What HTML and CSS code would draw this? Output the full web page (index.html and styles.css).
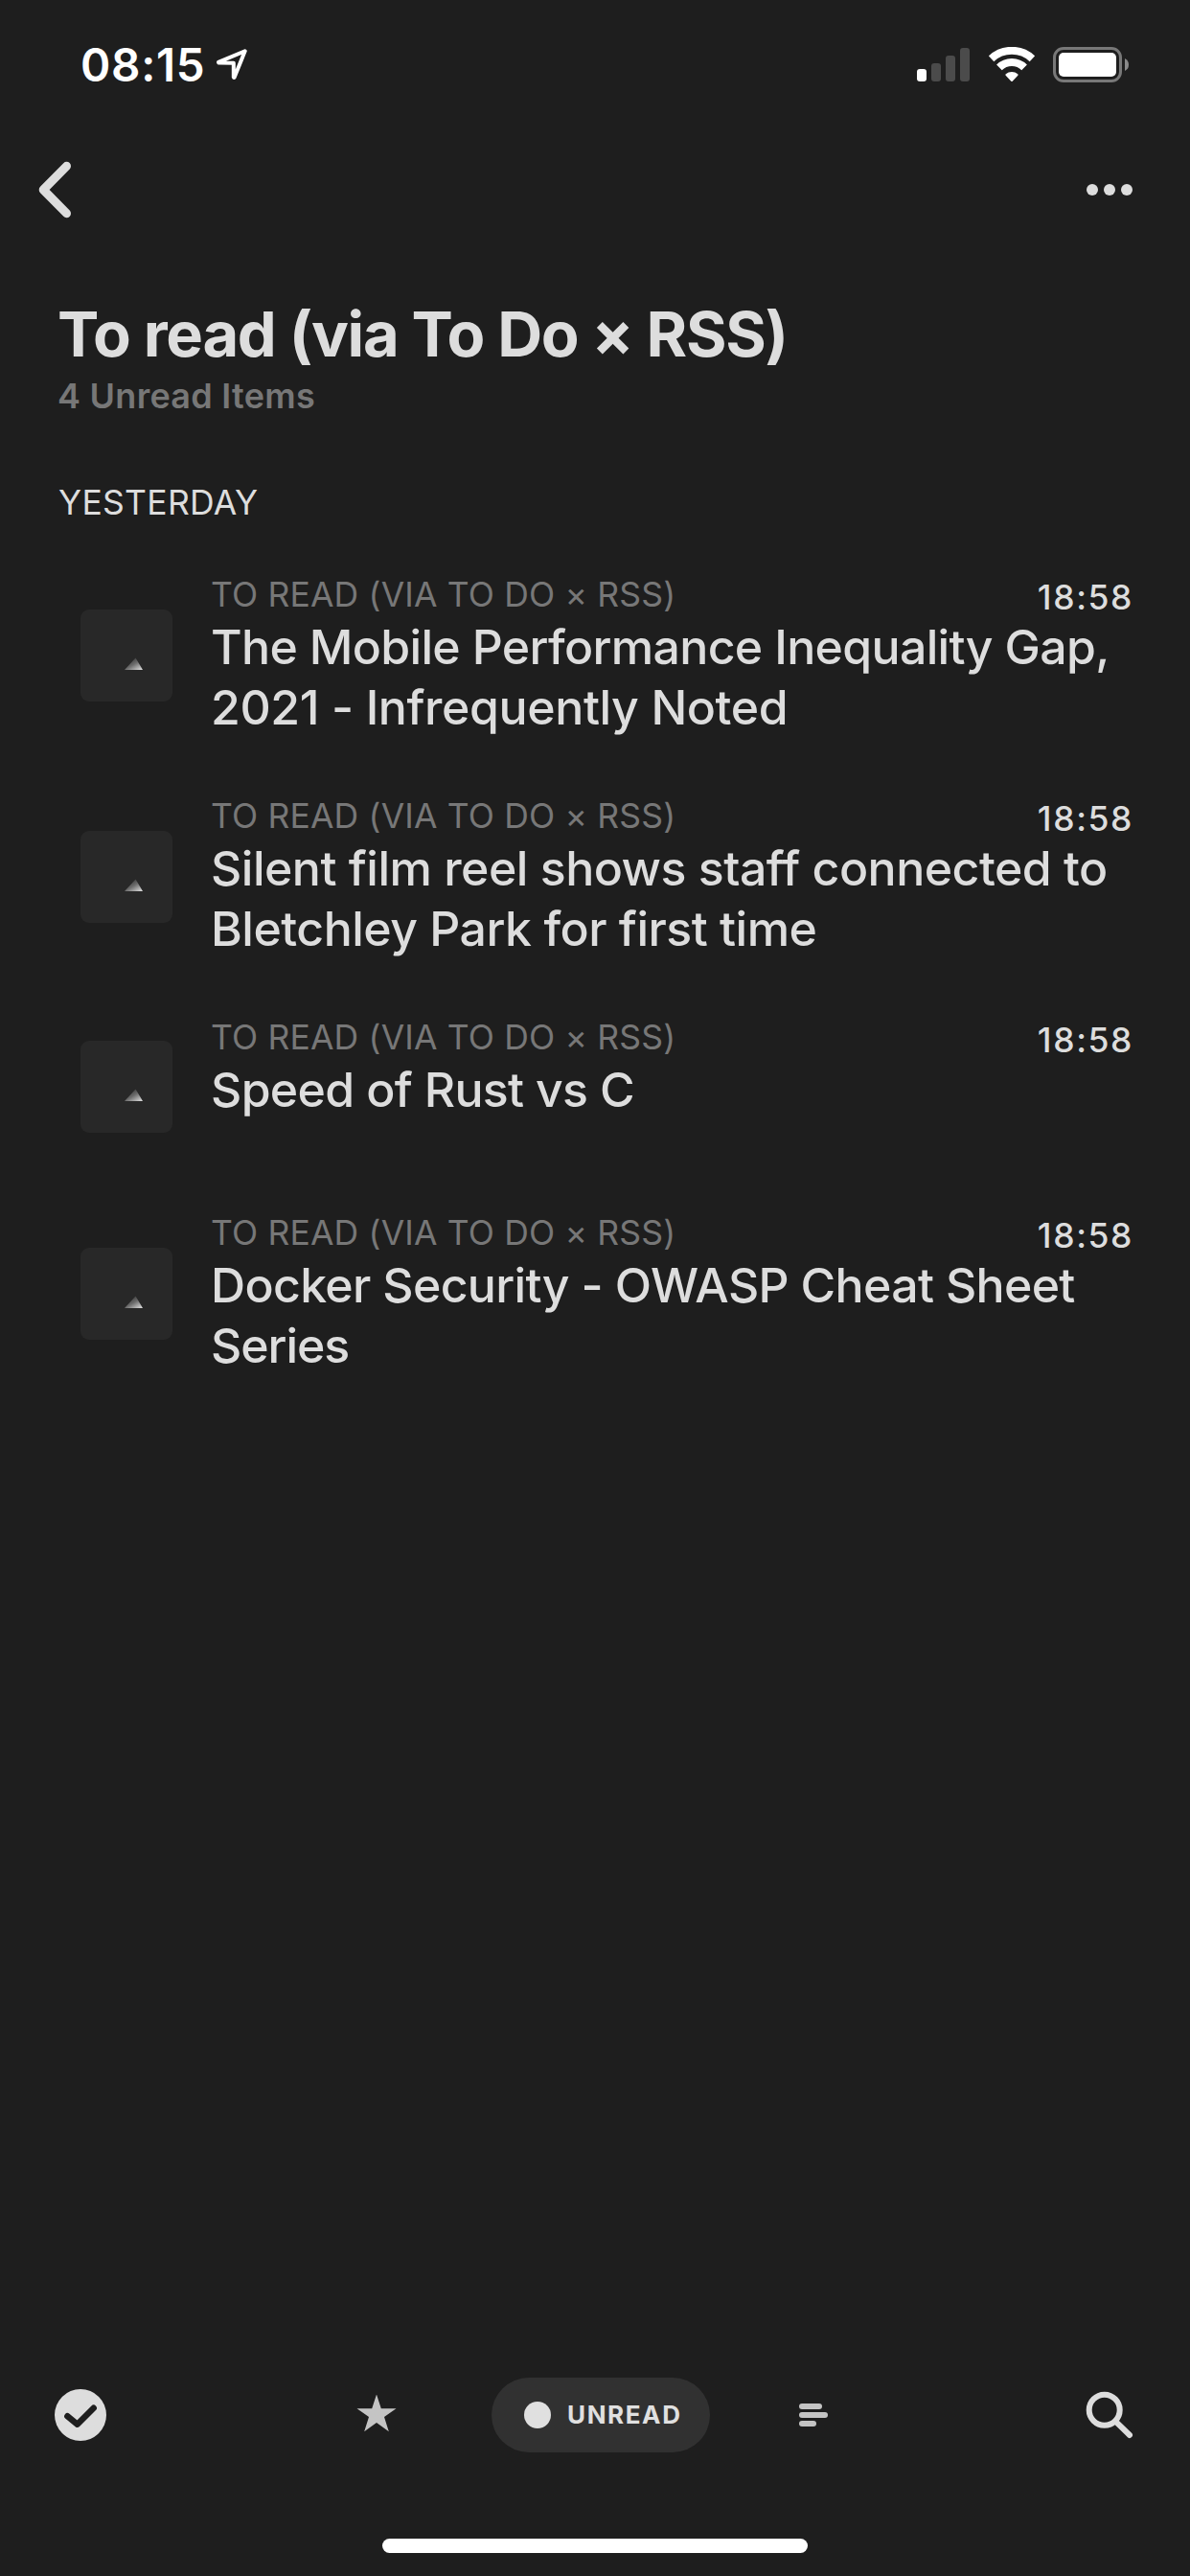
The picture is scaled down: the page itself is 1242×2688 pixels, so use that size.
FILE: index.html
```html
<!DOCTYPE html>
<html lang="en">
<head>
<meta charset="utf-8">
<title>To read (via To Do × RSS)</title>
<link rel="stylesheet" href="styles.css">
</head>
<body>
<svg class="defs" aria-hidden="true">
  <defs>
    <linearGradient id="fade" x1="0.1" y1="0.1" x2="0.9" y2="1">
      <stop offset="0" stop-color="#2a2a2a"/>
      <stop offset="0.5" stop-color="#6c6c6c"/>
      <stop offset="1" stop-color="#d8d8d8"/>
    </linearGradient>
    <symbol id="placeholder" viewBox="0 0 96 96">
      <path d="M46 63 L57.5 50.5 L65 63 Z" fill="url(#fade)"/>
    </symbol>
  </defs>
</svg>
<div class="screen">
  <header class="status">
    <div class="status-left">
      <span class="clock">08:15</span>
      <svg class="location" width="34" height="34" viewBox="0 0 34 34"><path d="M30.7 3.3 L3 14.8 Q3 15.6 4 15.6 L18.8 15.7 V30.5 Q19 31.6 19.7 30.6 Z"/></svg>
    </div>
    <div class="status-right">
      <svg width="55" height="35" viewBox="0 0 55 35">
        <rect x="0" y="22" width="10" height="13" rx="3" fill="#fff"/>
        <rect x="15" y="16" width="10" height="19" rx="3" fill="#4b4b4b"/>
        <rect x="30" y="8" width="10" height="27" rx="3" fill="#4b4b4b"/>
        <rect x="45" y="0" width="10" height="35" rx="3" fill="#4b4b4b"/>
      </svg>
      <svg class="wifi" width="48" height="37" viewBox="0 0 48 37">
        <path class="arc" d="M2.6 12.2 A31.5 31.5 0 0 1 45.4 12.2"/>
        <path class="arc" d="M10.9 21.4 A18.6 18.6 0 0 1 37.1 21.4"/>
        <path class="dot" d="M24 35 L18.4 29 A8.5 8.5 0 0 1 29.6 29 Z"/>
      </svg>
      <svg width="80" height="37" viewBox="0 0 80 37">
        <rect x="1.5" y="1.5" width="69" height="34" rx="9.5" fill="none" stroke="#787878" stroke-width="3"/>
        <rect x="6" y="6" width="60" height="25" rx="5" fill="#fff"/>
        <path d="M75 12 Q79 14 79 18.5 Q79 23 75 25 Z" fill="#8a8a8a"/>
      </svg>
    </div>
  </header>

  <nav class="navbar">
    <svg width="36" height="60" viewBox="0 0 36 60"><path class="chevron" d="M29.5 5.3 L5.2 30 L29.5 54.7"/></svg>
    <svg width="48" height="12" viewBox="0 0 48 12"><g fill="#ddd"><circle cx="6" cy="6" r="6"/><circle cx="24" cy="6" r="6"/><circle cx="42" cy="6" r="6"/></g></svg>
  </nav>

  <main class="content">
    <h1>To read (via To Do × RSS)</h1>
    <p class="count">4 Unread Items</p>
    <h2>YESTERDAY</h2>
    <ul class="items">
      <li class="item">
        <svg class="thumb"><use href="#placeholder"/></svg>
        <div class="body">
          <div class="meta"><span class="feed">TO READ (VIA TO DO × RSS)</span><time>18:58</time></div>
          <h3><span class="snug">The Mobile Performance Inequality Gap,</span><span class="loose">2021 - Infrequently Noted</span></h3>
        </div>
      </li>
      <li class="item">
        <svg class="thumb"><use href="#placeholder"/></svg>
        <div class="body">
          <div class="meta"><span class="feed">TO READ (VIA TO DO × RSS)</span><time>18:58</time></div>
          <h3><span>Silent film reel shows staff connected to</span><span>Bletchley Park for first time</span></h3>
        </div>
      </li>
      <li class="item item-short">
        <svg class="thumb"><use href="#placeholder"/></svg>
        <div class="body">
          <div class="meta"><span class="feed">TO READ (VIA TO DO × RSS)</span><time>18:58</time></div>
          <h3><span class="snug">Speed of Rust vs C</span></h3>
        </div>
      </li>
      <li class="item">
        <svg class="thumb"><use href="#placeholder"/></svg>
        <div class="body">
          <div class="meta"><span class="feed">TO READ (VIA TO DO × RSS)</span><time>18:58</time></div>
          <h3><span class="snug">Docker Security - OWASP Cheat Sheet</span><span class="tight">Series</span></h3>
        </div>
      </li>
    </ul>
  </main>

  <footer>
    <div class="toolbar">
      <svg width="54" height="54" viewBox="0 0 54 54"><circle cx="27" cy="27" r="27" fill="#ddd"/><path class="check" d="M13.4 28.3 L23.7 36.7 L40.7 19.8"/></svg>
      <div class="filters">
        <svg width="42" height="42" viewBox="0 0 42 42"><path fill="#c4c4c4" d="M21 -0.5 L25.8 14.2 H41.5 L29 23 L33.8 38.2 L21 29 L8.2 38.2 L13 23 L0.5 14.2 H16.2 Z"/></svg>
        <div class="pill"><i></i><span>UNREAD</span></div>
        <svg width="30" height="24" viewBox="0 0 30 24"><g fill="#c4c4c4"><rect width="24" height="6" rx="3"/><rect y="9" width="30" height="6" rx="3"/><rect y="18" width="18" height="6" rx="3"/></g></svg>
      </div>
      <svg width="58" height="50" viewBox="0 0 58 50"><g class="search"><circle cx="27.7" cy="19.8" r="16"/><path d="M40 32.3 L54 46"/></g></svg>
    </div>
    <div class="home"></div>
  </footer>
</div>
</body>
</html>
```
FILE: styles.css
```css
* { box-sizing: border-box; margin: 0; padding: 0; }

body {
  background: #1e1e1e;
  color: #ddd;
  font-family: Inter, "Liberation Sans", sans-serif;
}

svg { display: block; flex: none; }
.defs { width: 0; height: 0; }

.screen {
  width: 1242px;
  height: 2688px;
  display: flex;
  flex-direction: column;
}

/* Status bar */
.status {
  height: 132px;
  padding: 0 63px 0 84px;
  display: flex;
  justify-content: space-between;
}
.status-left { display: flex; padding-top: 43px; }
.clock {
  width: 141px;
  color: #fff;
  font-size: 47.5px;
  font-weight: 600;
  line-height: 49px;
  letter-spacing: 0.7px;
}
.location {
  margin-top: 7px;
  fill: none;
  stroke: #fff;
  stroke-width: 4;
  stroke-linejoin: round;
}
.status-right { display: flex; align-items: flex-start; padding-top: 49px; }
.status-right svg:first-child { margin-top: 1px; }
.wifi { margin: 0 19.5px; }
.wifi .arc { fill: none; stroke: #fff; stroke-width: 8; }
.wifi .dot { fill: #fff; stroke: #fff; stroke-width: 2; stroke-linejoin: round; }

/* Navigation bar */
.navbar {
  height: 132px;
  padding: 0 60px 0 40px;
  display: flex;
  align-items: center;
  justify-content: space-between;
}
.chevron {
  fill: none;
  stroke: #ddd;
  stroke-width: 9;
  stroke-linecap: round;
  stroke-linejoin: round;
}

/* Article list */
.content { flex: 1; padding: 45px 60px 0; }
h1 {
  font-size: 65px;
  font-weight: 700;
  line-height: 79px;
  letter-spacing: -1.28px;
}
.count {
  margin-top: 3px;
  color: #777;
  font-size: 36px;
  font-weight: 600;
  line-height: 44px;
  letter-spacing: 0.27px;
}
h2 {
  margin-top: 67px;
  padding-left: 1px;
  font-size: 35.5px;
  font-weight: 400;
  line-height: 45px;
  letter-spacing: 0.3px;
}
.items { margin-top: 51px; list-style: none; }
.item {
  display: flex;
  align-items: center;
  gap: 40px;
  padding: 0 0 59px 24px;
}
.thumb {
  width: 96px;
  height: 96px;
  border-radius: 9px;
  background: #282828;
}
.body { flex: 1; height: 172px; }
.item-short { padding-bottom: 56px; }
.item-short .body { height: 148px; }
.meta {
  display: flex;
  justify-content: space-between;
  font-size: 35.5px;
  line-height: 45px;
}
.feed { color: #777; letter-spacing: 0.16px; }
time {
  margin-bottom: -3px;
  padding-top: 3px;
  font-weight: 500;
  letter-spacing: 1.6px;
  margin-right: -1px;
}
h3 {
  margin-top: 1px;
  font-size: 50px;
  font-weight: 500;
  line-height: 63px;
  letter-spacing: -0.51px;
}
h3 span { display: block; white-space: nowrap; }
.snug { letter-spacing: -0.67px; }
.loose { letter-spacing: -0.4px; }
.tight { letter-spacing: -1.06px; }

/* Bottom toolbar */
.toolbar {
  height: 78px;
  padding: 0 59px 0 57px;
  display: flex;
  align-items: center;
  justify-content: space-between;
}
.check {
  fill: none;
  stroke: #1e1e1e;
  stroke-width: 6.5;
  stroke-linecap: round;
  stroke-linejoin: round;
}
.filters { display: flex; align-items: center; }
.pill {
  width: 228px;
  height: 78px;
  margin: 0 93px 0 99px;
  padding-left: 34px;
  border-radius: 39px;
  background: #313131;
  color: #e0e0e0;
  display: flex;
  align-items: center;
  gap: 17px;
}
.pill i { width: 28px; height: 28px; border-radius: 50%; background: #e0e0e0; }
.pill span { font-size: 26px; font-weight: 700; line-height: 32px; letter-spacing: 1.6px; }
.search { fill: none; stroke: #ddd; stroke-width: 6; stroke-linecap: round; }
.home {
  width: 444px;
  height: 15px;
  margin: 90px auto 24px;
  border-radius: 8px;
  background: #fff;
}
```
